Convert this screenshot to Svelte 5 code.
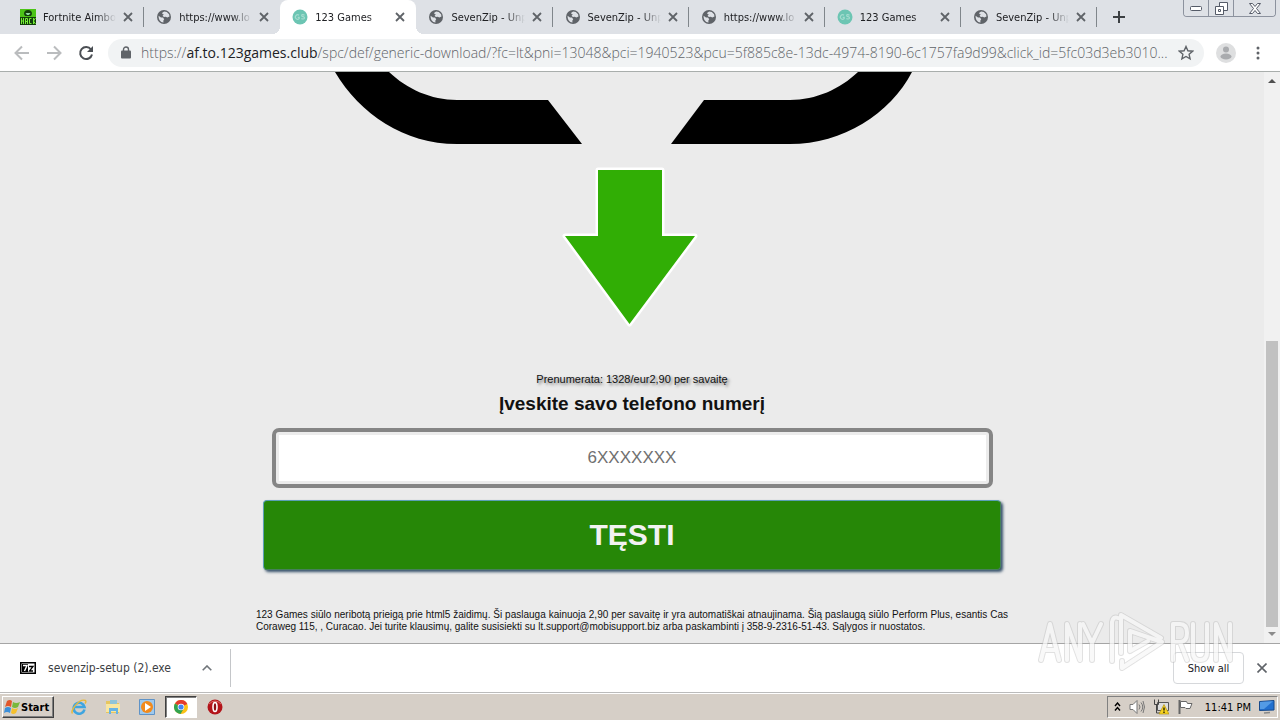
<script>
  const tabs = [
    { title: 'Fortnite Aimbot', icon: 'hack' },
    { title: 'https://www.lo', icon: 'globe' },
    { title: '123 Games', icon: 'games', active: true },
    { title: 'SevenZip - Unp', icon: 'globe' },
    { title: 'SevenZip - Unp', icon: 'globe' },
    { title: 'https://www.lo', icon: 'globe' },
    { title: '123 Games', icon: 'games' },
    { title: 'SevenZip - Unp', icon: 'globe' }
  ];
  let phone = $state('');
</script>

<div class="window">
  <header class="strip">
    <div class="tabs">
      {#each tabs as tab}
        <div class="tab" class:active={tab.active}>
          {#if tab.icon === 'globe'}
            <svg class="fav" viewBox="0 0 16 16" aria-hidden="true">
              <circle cx="8" cy="8" r="7" fill="#5f6368" />
              <path d="M2.600 6.800 5 8.400l2 .2 1.200 1.700-.9 1.500.2 1.700C4.600 13.600 2.300 10.500 2.600 6.800zM6.500 3.600 8.200 2.400l2.600.5 2.300 2.300.4 2.300-2.200.9-1.600-.7-1.800.3-1.300-1.300 1.200-1.400-1.600-.4z" fill="#dee1e6" />
            </svg>
          {:else if tab.icon === 'games'}
            <svg class="fav" viewBox="0 0 16 16" aria-hidden="true">
              <circle cx="8" cy="8" r="7.500" fill="#6cc5b3" />
              <path d="M7 6.300a2.200 2.200 0 1 0 .2 3.200V8.300H5.700M12.500 6.200c-1.500-1-3-.6-2.800.6.200 1.200 2.800.6 2.800 2s-2 1.500-3.100.7" fill="none" stroke="#a4dccf" stroke-width="1.200" />
            </svg>
          {:else}
            <svg class="fav" viewBox="0 0 16 16" aria-hidden="true">
              <path fill="#4cc417" d="M0 0h16v16H0z" />
              <path fill="#123f0b" d="M4 5a4 4 0 0 1 8 0l-1 2H5zM0 8h16v8H0z" />
              <path fill="#8fd9a0" d="M5.500 4h5L9 6H7z" />
              <path d="M1.500 9v6M3.500 9v6M1.500 12h2M5.500 15v-5.500h2V15M5.500 12.500h2M11.500 9.500h-2v5h2M13.500 9v6M15.500 9l-2 3 2 3" fill="none" stroke="#75ed35" />
            </svg>
          {/if}
          <span class="title">{tab.title}</span>
          <button class="icon close" aria-label="Close tab">
            <svg width="10" height="10" viewBox="0 0 10 10"><path d="M1 1l8 8M9 1l-8 8" stroke="#5f6368" stroke-width="1.800" /></svg>
          </button>
        </div>
      {/each}
    </div>
    <button class="icon add" aria-label="New tab">
      <svg width="12" height="12" viewBox="0 0 12 12"><path d="M6 0v12M0 6h12" stroke="#3c4043" stroke-width="2" /></svg>
    </button>
    <div class="controls">
      <button aria-label="Minimize"><svg width="12" height="5" viewBox="0 0 12 5"><rect x=".5" y=".5" width="11" height="4" rx="1" fill="#fff" stroke="#555b68" /></svg></button>
      <button aria-label="Restore"><svg width="13" height="13" viewBox="0 0 13 13" fill="#fff" stroke="#555b68"><path d="M4.500.5h8v8h-8z" /><path d="M.5 4.500h8v8h-8zM3.500 7.500h2v2h-2z" /></svg></button>
      <button class="wide" aria-label="Close"><svg width="12" height="11" viewBox="0 0 12 11"><path d="M.5.500h3L6 3.500 8.500.5h3l-4 5 4 5h-3L6 7.500l-2.500 3h-3l4-5z" fill="#fff" stroke="#555b68" /></svg></button>
    </div>
  </header>

  <nav class="toolbar">
    <button class="icon" aria-label="Back"><svg width="16" height="16" viewBox="0 0 16 16" fill="none" stroke="#babcbe" stroke-width="2"><path d="M15 8H2M8 1.500 1.500 8 8 14.500" /></svg></button>
    <button class="icon" aria-label="Forward"><svg width="16" height="16" viewBox="0 0 16 16" fill="none" stroke="#babcbe" stroke-width="2"><path d="M1 8h13M8 1.500 14.500 8 8 14.500" /></svg></button>
    <button class="icon" aria-label="Reload"><svg width="16" height="16" viewBox="0 0 16 16"><path d="M13 4.500A6 6 0 1 0 14 9.500" fill="none" stroke="#4b4f54" stroke-width="2" /><path d="M15 1v6H9z" fill="#4b4f54" /></svg></button>
    <div class="omnibox">
      <svg width="10" height="13" viewBox="0 0 10 13" aria-hidden="true"><path d="M2.500 5V3.500a2.500 2.500 0 0 1 5 0V5" fill="none" stroke="#5f6368" stroke-width="1.400" /><rect y="4.500" width="10" height="8" rx="1" fill="#5f6368" /></svg>
      <span class="url">https://<b>af.to.123games.club</b>/spc/def/generic-download/?fc=lt&amp;pni=13048&amp;pci=1940523&amp;pcu=5f885c8e-13dc-4974-8190-6c1757fa9d99&amp;click_id=5fc03d3eb3010...</span>
      <button class="icon" aria-label="Bookmark this page"><svg width="16" height="16" viewBox="0 0 16 16"><path d="M8 1.500l1.900 4.300 4.700.4-3.500 3.100 1 4.600L8 11.500l-4.100 2.400 1-4.600L1.400 6.200l4.700-.4z" fill="none" stroke="#5f6368" stroke-width="1.400" /></svg></button>
    </div>
    <button class="icon" aria-label="Profile"><svg width="20" height="20" viewBox="0 0 20 20"><circle cx="10" cy="10" r="10" fill="#dedfe0" /><circle cx="10" cy="6.500" r="3" fill="#a9abae" /><ellipse cx="10" cy="13.500" rx="5.500" ry="3" fill="#a9abae" /></svg></button>
    <button class="icon menu" aria-label="Menu"><svg width="4" height="14" viewBox="0 0 4 14" fill="#5f6368"><circle cx="2" cy="2" r="1.500" /><circle cx="2" cy="7" r="1.500" /><circle cx="2" cy="12" r="1.500" /></svg></button>
  </nav>

  <div class="view">
    <main>
      <svg class="hero" viewBox="0 0 752 298" aria-hidden="true">
        <path d="M79 0C104 42 148 72 201 72H326L292 28H201C175 28 151 17 133 0zM656 0C634 42 587 72 534 72H415L448 28H534C560 28 584 17 602 0z" />
        <path d="M342 98h64v66h33L373.500 252 309 164h33z" fill="#31ae05" stroke="#fff" stroke-width="5" stroke-linejoin="round" paint-order="stroke" />
      </svg>
      <form onsubmit={(e) => e.preventDefault()}>
        <p class="price">Prenumerata: 1328/eur2,90 per savaitę</p>
        <label for="phone">Įveskite savo telefono numerį</label>
        <input id="phone" type="tel" placeholder="6XXXXXXX" bind:value={phone} />
        <button class="submit">TĘSTI</button>
      </form>
      <p class="legal">123 Games siūlo neribotą prieigą prie html5 žaidimų. Ši paslauga kainuoja 2,90 per savaitę ir yra automatiškai atnaujinama. Šią paslaugą siūlo Perform Plus, esantis Cas Coraweg 115, , Curacao. Jei turite klausimų, galite susisiekti su lt.support@mobisupport.biz arba paskambinti į 358-9-2316-51-43. Sąlygos ir nuostatos.</p>
    </main>
    <div class="scroll" aria-hidden="true">
      <svg width="8" height="4" viewBox="0 0 8 4"><path d="M4 0l4 4H0z" fill="#505050" /></svg>
      <div class="track"><div class="thumb"></div></div>
      <svg width="8" height="4" viewBox="0 0 8 4"><path d="M0 0h8L4 4z" fill="#8b8b8b" /></svg>
    </div>
  </div>

  <section class="downloads">
    <div class="file">
      <svg width="16" height="12" viewBox="0 0 16 12" aria-hidden="true"><path d="M0 0h16v12H0z" /><path d="M1.500 1.500h13v9h-13z" fill="#fff" /><path d="M2 2h6v8H2z" /><path d="M3 3.500h4L4.500 9" fill="none" stroke="#fff" stroke-width="1.400" /><path d="M9 4.500h4L9.500 9H13" fill="none" stroke="#000" stroke-width="1.300" /></svg>
      <span class="filename">sevenzip-setup (2).exe</span>
      <button class="icon" aria-label="Download options"><svg width="10" height="6" viewBox="0 0 10 6"><path d="M.7 5.300 5 1l4.300 4.300" fill="none" stroke="#70757a" stroke-width="1.600" /></svg></button>
    </div>
    <div class="right">
      <button class="show">Show all</button>
      <button class="icon" aria-label="Close downloads"><svg width="10" height="10" viewBox="0 0 10 10"><path d="M.5.500l9 9M9.500.5l-9 9" stroke="#5f6368" stroke-width="1.600" /></svg></button>
    </div>
    <svg class="mark" viewBox="0 0 200 70" role="img" aria-label="Any Run">
      <defs>
        <path id="mark-lines" d="M3 53 12 17l9 36M6 43h12M29 53V17l13 36V17M45 17l9 19 9-19M54 36v17M135 53V17h7q7 0 7 9t-7 9h-7M142 35l7 18M155 17v28q0 8 7 8t7-8V17M178 53V17l14 36V17M74 54V15q1-6 6-4M83 46V8L123 31M92 44V24l32 11L84 61V54M92 44l18-10" />
      </defs>
      <g fill="none" stroke-linejoin="round" stroke-linecap="round">
        <use href="#mark-lines" stroke="#bdbdbd" stroke-opacity=".6" stroke-width="6" />
        <use href="#mark-lines" stroke="#f8f8f8" stroke-width="4" />
      </g>
    </svg>
  </section>

  <footer class="taskbar">
    <button class="start">
      <svg width="16" height="16" viewBox="0 0 16 16" aria-hidden="true"><path d="M3 2q3-2 5 0L7 8Q4 6 1 8z" fill="#e2572b" /><path d="M9 3q3 2 7 0l-2 5q-3 2-6 0z" fill="#79b83c" /><path d="M1 9q3-2 6 0l-1 5q-3-2-6 0z" fill="#3c8fd9" /><path d="M8 9q3 2 6 0l-2 5q-3 2-5 0z" fill="#f5c02c" /></svg>
      Start
    </button>
    <div class="apps">
      <button aria-label="Internet Explorer"><svg width="16" height="16" viewBox="0 0 16 16" fill="none"><path d="M13.500 10.500A5.500 5.500 0 1 1 13.500 8H4" stroke="#3fa5e0" stroke-width="2.600" /><path d="M1.500 14.500C-1 12 8-1 14.500 1.500q1 1-.5 3" stroke="#e8b93c" stroke-width="1.400" /></svg></button>
      <button aria-label="Explorer"><svg width="16" height="16" viewBox="0 0 16 16"><path d="M1 2h5l1 2h7v10H1z" fill="#e6c65f" /><path d="M5 1h7v4H5z" fill="#8fc4d8" /><path d="M1 5h14v8H1z" fill="#f8e6a0" /><path d="M4 15V9h9v6h-2v-3H6v3z" fill="#67b3e4" /></svg></button>
      <button aria-label="Media Player"><svg width="16" height="16" viewBox="0 0 16 16"><path d="M.5.500h15v15H.5z" fill="#9fc9ed" stroke="#5f93c7" /><circle cx="8" cy="8" r="6" fill="#f28a1c" /><path d="M6 4l6 4-6 4z" fill="#fff" /></svg></button>
      <button class="current" aria-label="Chrome"><svg width="14" height="14" viewBox="0 0 14 14"><circle cx="7" cy="7" r="7" fill="#fbc116" /><path d="M7 7 1 3.400A7 7 0 0 1 13.300 4z" fill="#e33b2e" /><path d="M1 3.400A7 7 0 0 0 6.500 14L9.500 9z" fill="#31a350" /><circle cx="7" cy="7" r="3.300" fill="#fff" /><circle cx="7" cy="7" r="2.600" fill="#4284f3" /></svg></button>
      <button aria-label="Opera"><svg width="16" height="16" viewBox="0 0 16 16"><circle cx="8" cy="8" r="7.500" fill="#b3141a" /><path d="M2 5q6-6 12 0" fill="none" stroke="#dd6b68" /><ellipse cx="8" cy="8" rx="2" ry="4.500" fill="#8d1015" stroke="#fff" stroke-width="1.600" /></svg></button>
    </div>
    <div class="tray">
      <svg width="7" height="10" viewBox="0 0 7 10" fill="none" stroke="#000" stroke-width="1.400"><path d="M1 4l2.500-3L6 4M1 8.500l2.500-3 2.500 3" /></svg>
      <svg width="16" height="16" viewBox="0 0 16 16" fill="none" stroke="#777"><path d="M1 5.500h3l4-4v13l-4-4H1z" fill="#fff" /><path d="M10 5.500q2 2.500 0 5M12 3.500q3.500 4.500 0 9M14 2q3 6 0 12" /></svg>
      <svg width="16" height="16" viewBox="0 0 16 16"><path d="M4.500 3.500h11v8h-11z" fill="#ddd" stroke="#555" /><path d="M1.500.5v5h4v-5M3.500 5v9h5" fill="none" stroke="#444" /><path d="M11 5.500l5 9.500H6z" fill="#f7d321" stroke="#a98a08" stroke-width=".6" /><path d="M11 8.500v3M11 12.500v1.500" stroke="#000" stroke-width="1.200" /></svg>
      <svg width="16" height="16" viewBox="0 0 16 16"><path d="M2.500 1v14" stroke="#666" stroke-width="2" /><path d="M3.500 2.500h6l1 2h4.500l-2 5H9l-1-1H3.500z" fill="#fff" stroke="#666" /></svg>
      <time>11:41 PM</time>
      <svg width="16" height="14" viewBox="0 0 16 14"><path d="M.5 1.500 15 .5v9.500l-14.500.5z" fill="#2270cf" stroke="#174a8b" /><path d="M1 2l13-.8L5 9H1z" fill="#539be5" /><path d="M5 13l6-.5" stroke="#888" stroke-width="1.500" /></svg>
    </div>
  </footer>
</div>

<style>
  :global(body) { margin: 0; }
  .window {
    display: flex;
    flex-direction: column;
    min-height: 100vh;
    font-family: "DejaVu Sans Condensed", "DejaVu Sans", sans-serif;
    font-size: 11px;
    color: #202124;
    background: #fff;
  }
  .window * { box-sizing: border-box; }
  button { font: inherit; color: inherit; margin: 0; }
  svg { display: block; flex: none; }
  p { margin: 0; }
  .icon { display: flex; align-items: center; justify-content: center; padding: 0; border: 0; background: none; }

  .strip { display: flex; align-items: flex-start; height: 34px; padding: 0 4px 0 8px; background: #dee1e6; }
  .tabs { display: flex; flex: 0 1 1089px; min-width: 0; align-self: stretch; }
  .tab { display: flex; flex: 1 1 0; min-width: 0; align-items: center; padding: 0 10px 0 12px; background: linear-gradient(#80868b, #80868b) right center / 1px 20px no-repeat; }
  .tab:has(+ .active) { background: none; }
  .active { position: relative; background: #fff; border-radius: 8px 8px 0 0; }
  .active::before, .active::after { content: ""; position: absolute; bottom: 0; width: 8px; height: 8px; }
  .active::before { right: 100%; background: radial-gradient(circle at 0 0, transparent 8px, #fff 8px); }
  .active::after { left: 100%; background: radial-gradient(circle at 100% 0, transparent 8px, #fff 8px); }
  .fav { width: 16px; height: 16px; }
  .title { flex: 1; min-width: 0; margin-left: 7px; overflow: hidden; white-space: nowrap; mask-image: linear-gradient(90deg, #000 calc(100% - 20px), transparent); }
  .close { width: 12px; height: 16px; margin-left: 6px; }
  .add { width: 28px; align-self: stretch; margin-left: 8px; }
  .controls { display: flex; margin-left: auto; border: 1px solid #8c929e; border-top: 0; border-radius: 0 0 4px 4px; overflow: hidden; }
  .controls button { display: flex; align-items: center; justify-content: center; width: 25px; height: 16px; padding: 0; border: 0; border-right: 1px solid #8c929e; background: #dee1e6; }
  .controls button.wide { width: 41px; border: 0; }

  .toolbar { display: flex; align-items: center; gap: 16px; height: 38px; padding: 0 20px 0 14px; border-bottom: 1px solid #a9aeac; }
  .omnibox { display: flex; flex: 1; min-width: 0; align-items: center; gap: 10px; height: 28px; margin: 0 -4px 0 -2px; padding: 0 10px 0 13px; border-radius: 14px; background: #f1f3f4; }
  .menu { margin-left: 4px; }
  .url { flex: 1; min-width: 0; overflow: hidden; white-space: nowrap; font-family: "Open Sans", "Noto Sans", sans-serif; font-size: 14px; font-weight: 300; line-height: 20px; color: #5f6368; }
  .url b { font-weight: 400; color: #202124; }

  .view { display: flex; flex: 1; background: #ebebeb; }
  main { flex: 1; min-width: 0; font-family: "Liberation Sans", Arial, sans-serif; color: #111; }
  .hero { width: 752px; max-width: 100%; margin: 0 auto; }
  form { display: flex; flex-direction: column; align-items: center; max-width: 752px; margin: 0 auto; padding: 0 7px; }
  .price { font-size: 11px; line-height: 18px; text-shadow: 2px 2px 3px #777; }
  label { font-size: 19px; font-weight: 700; line-height: 22px; margin: 5px 0 13px; }
  input { width: calc(100% - 17px); height: 60px; padding: 0; border: 4px solid #858585; border-radius: 7px; outline: 0; background: #fff; box-shadow: inset 0 0 0 3px #ececec; font: 17px "Liberation Sans", Arial, sans-serif; text-align: center; }
  input::placeholder { color: #707070; opacity: 1; }
  .submit { width: 100%; height: 70px; margin-top: 12px; padding: 0; border: 1px solid #56935c; border-color: #5b9fb5 #46805a #46805a #5b9fb5; border-radius: 4px; background: #268707; color: #f2f2f2; font-size: 30px; font-weight: 700; box-shadow: 2px 2px 3px #35506a; }
  .legal { max-width: 752px; margin: 39px auto 0; font-size: 10px; line-height: 12px; text-align: justify; }
  .scroll { display: flex; flex-direction: column; align-items: center; width: 16px; padding: 7px 0; background: #f1f1f1; }
  .track { display: flex; flex: 1; flex-direction: column; justify-content: flex-end; padding: 5px 0; }
  .thumb { width: 12px; height: 53%; background: #c1c1c1; }

  .downloads { position: relative; display: flex; align-items: center; justify-content: space-between; height: 50px; border-top: 1px solid #a5a5a5; border-bottom: 1px solid #bbb; }
  .file { display: flex; align-items: center; height: 38px; width: 231px; padding: 0 18px 0 20px; border-right: 1px solid #c4c6c9; }
  .filename { flex: 1; margin-left: 12px; font-size: 12px; color: #3c4043; }
  .right { display: flex; align-items: center; gap: 13px; padding-right: 13px; }
  .show { width: 71px; height: 32px; padding: 0; border: 1px solid #d6d8db; border-radius: 4px; background: #fff; }
  .mark { position: absolute; right: 42px; top: -37px; width: 200px; height: 70px; opacity: .75; pointer-events: none; }

  .taskbar { display: flex; align-items: center; height: 27px; padding: 2px; border-top: 1px solid #fff; background: #d6cfc7; color: #000; }
  .start { display: flex; align-items: center; gap: 1px; width: 52px; height: 22px; padding: 0 1px; border: 1px solid; border-color: #fff #404040 #404040 #fff; background: #d6cfc7; box-shadow: inset -1px -1px #808080; font-weight: 700; }
  .apps { display: flex; margin-left: 9px; gap: 2px; }
  .apps button { display: flex; align-items: center; justify-content: center; width: 32px; height: 22px; padding: 0; border: 0; background: none; }
  .apps .current { border: 1px solid; border-color: #404040 #fff #fff #404040; background: #fff; box-shadow: inset 1px 1px #808080; }
  .tray { display: flex; align-items: center; gap: 8px; height: 22px; margin-left: auto; padding: 0 2px 0 6px; border: 1px solid; border-color: #808080 #fff #fff #808080; }
  time { margin-left: 4px; }
</style>
